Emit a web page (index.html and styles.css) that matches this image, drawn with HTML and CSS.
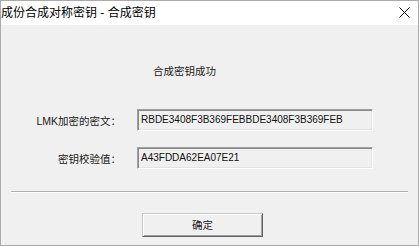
FILE: index.html
```html
<!DOCTYPE html>
<html lang="zh-CN">
<head>
<meta charset="utf-8">
<title>合成密钥</title>
<link rel="stylesheet" href="styles.css">
</head>
<body>
<div class="window">
  <div class="titlebar">
    <span class="title">成份合成对称密钥 - 合成密钥</span>
    <svg class="close" width="11" height="11" viewBox="0 0 11 11"><path d="M0.5 0.5 L10.5 10.5 M10.5 0.5 L0.5 10.5" stroke="#000" stroke-width="1" fill="none"/></svg>
  </div>
  <div class="content">
    <div class="message">合成密钥成功</div>
    <div class="rows">
      <div class="row">
        <span class="label">LMK加密的密文：</span>
        <div class="field">RBDE3408F3B369FEBBDE3408F3B369FEB</div>
      </div>
      <div class="row">
        <span class="label">密钥校验值：</span>
        <div class="field">A43FDDA62EA07E21</div>
      </div>
    </div>
    <div class="separator"></div>
    <div class="actions">
      <button class="btn">确定</button>
    </div>
  </div>
</div>
</body>
</html>
```

FILE: styles.css
```css
html, body {
  margin: 0;
  padding: 0;
  background: #ffffff;
}
.window {
  width: 419px;
  height: 246px;
  box-sizing: border-box;
  border: 1px solid #aaaaaa;
  display: flex;
  flex-direction: column;
  font-family: "Liberation Sans", "Noto Sans CJK SC", sans-serif;
  color: #000;
}
.titlebar {
  height: 24px;
  background: #ffffff;
  display: flex;
  align-items: center;
  justify-content: space-between;
  padding: 0 8px 0 0;
}
.title {
  font-size: 12px;
  line-height: 24px;
  margin-top: -1px;
  white-space: nowrap;
}
.close {
  display: block;
  margin-top: -2px;
}
.content {
  flex: 1;
  background: #f0f0f0;
  display: flex;
  flex-direction: column;
}
.message {
  font-size: 10.5px;
  line-height: 14px;
  margin: 39px 0 0 152px;
  color: #1a1a1a;
}
.rows {
  margin-top: 31px;
  display: flex;
  flex-direction: column;
  gap: 16px;
}
.row {
  display: flex;
  align-items: center;
  height: 22px;
}
.label {
  width: 120px;
  text-align: right;
  font-size: 10.5px;
  color: #1a1a1a;
  margin-right: 16px;
  white-space: nowrap;
}
.field {
  width: 236px;
  height: 22px;
  box-sizing: border-box;
  border-top: 1px solid #a0a0a0;
  border-left: 1px solid #a0a0a0;
  border-right: 1px solid #ffffff;
  border-bottom: 1px solid #ffffff;
  box-shadow: inset 1px 1px 0 #8a8a8a, inset -1px -1px 0 #e3e3e3;
  background: #f0f0f0;
  font-size: 10px;
  line-height: 16px;
  padding: 2px 0 0 3px;
  white-space: nowrap;
  overflow: hidden;
  color: #111;
}
.separator {
  margin: 22px 10px 0 10px;
  border-top: 1px solid #b0b0b0;
  border-bottom: 1px solid #ffffff;
}
.actions {
  display: flex;
  padding-left: 141px;
  margin-top: 20px;
}
.btn {
  width: 121px;
  height: 24px;
  box-sizing: border-box;
  margin: 0;
  padding: 0;
  background: #f0f0f0;
  border-top: 1px solid #c8c8c8;
  border-left: 1px solid #c8c8c8;
  border-right: 1px solid #646464;
  border-bottom: 1px solid #646464;
  box-shadow: inset 1px 1px 0 #ffffff, inset -1px -1px 0 #a0a0a0;
  font-family: "Liberation Sans", "Noto Sans CJK SC", sans-serif;
  font-size: 10.5px;
  color: #1a1a1a;
  line-height: 20px;
}
```
